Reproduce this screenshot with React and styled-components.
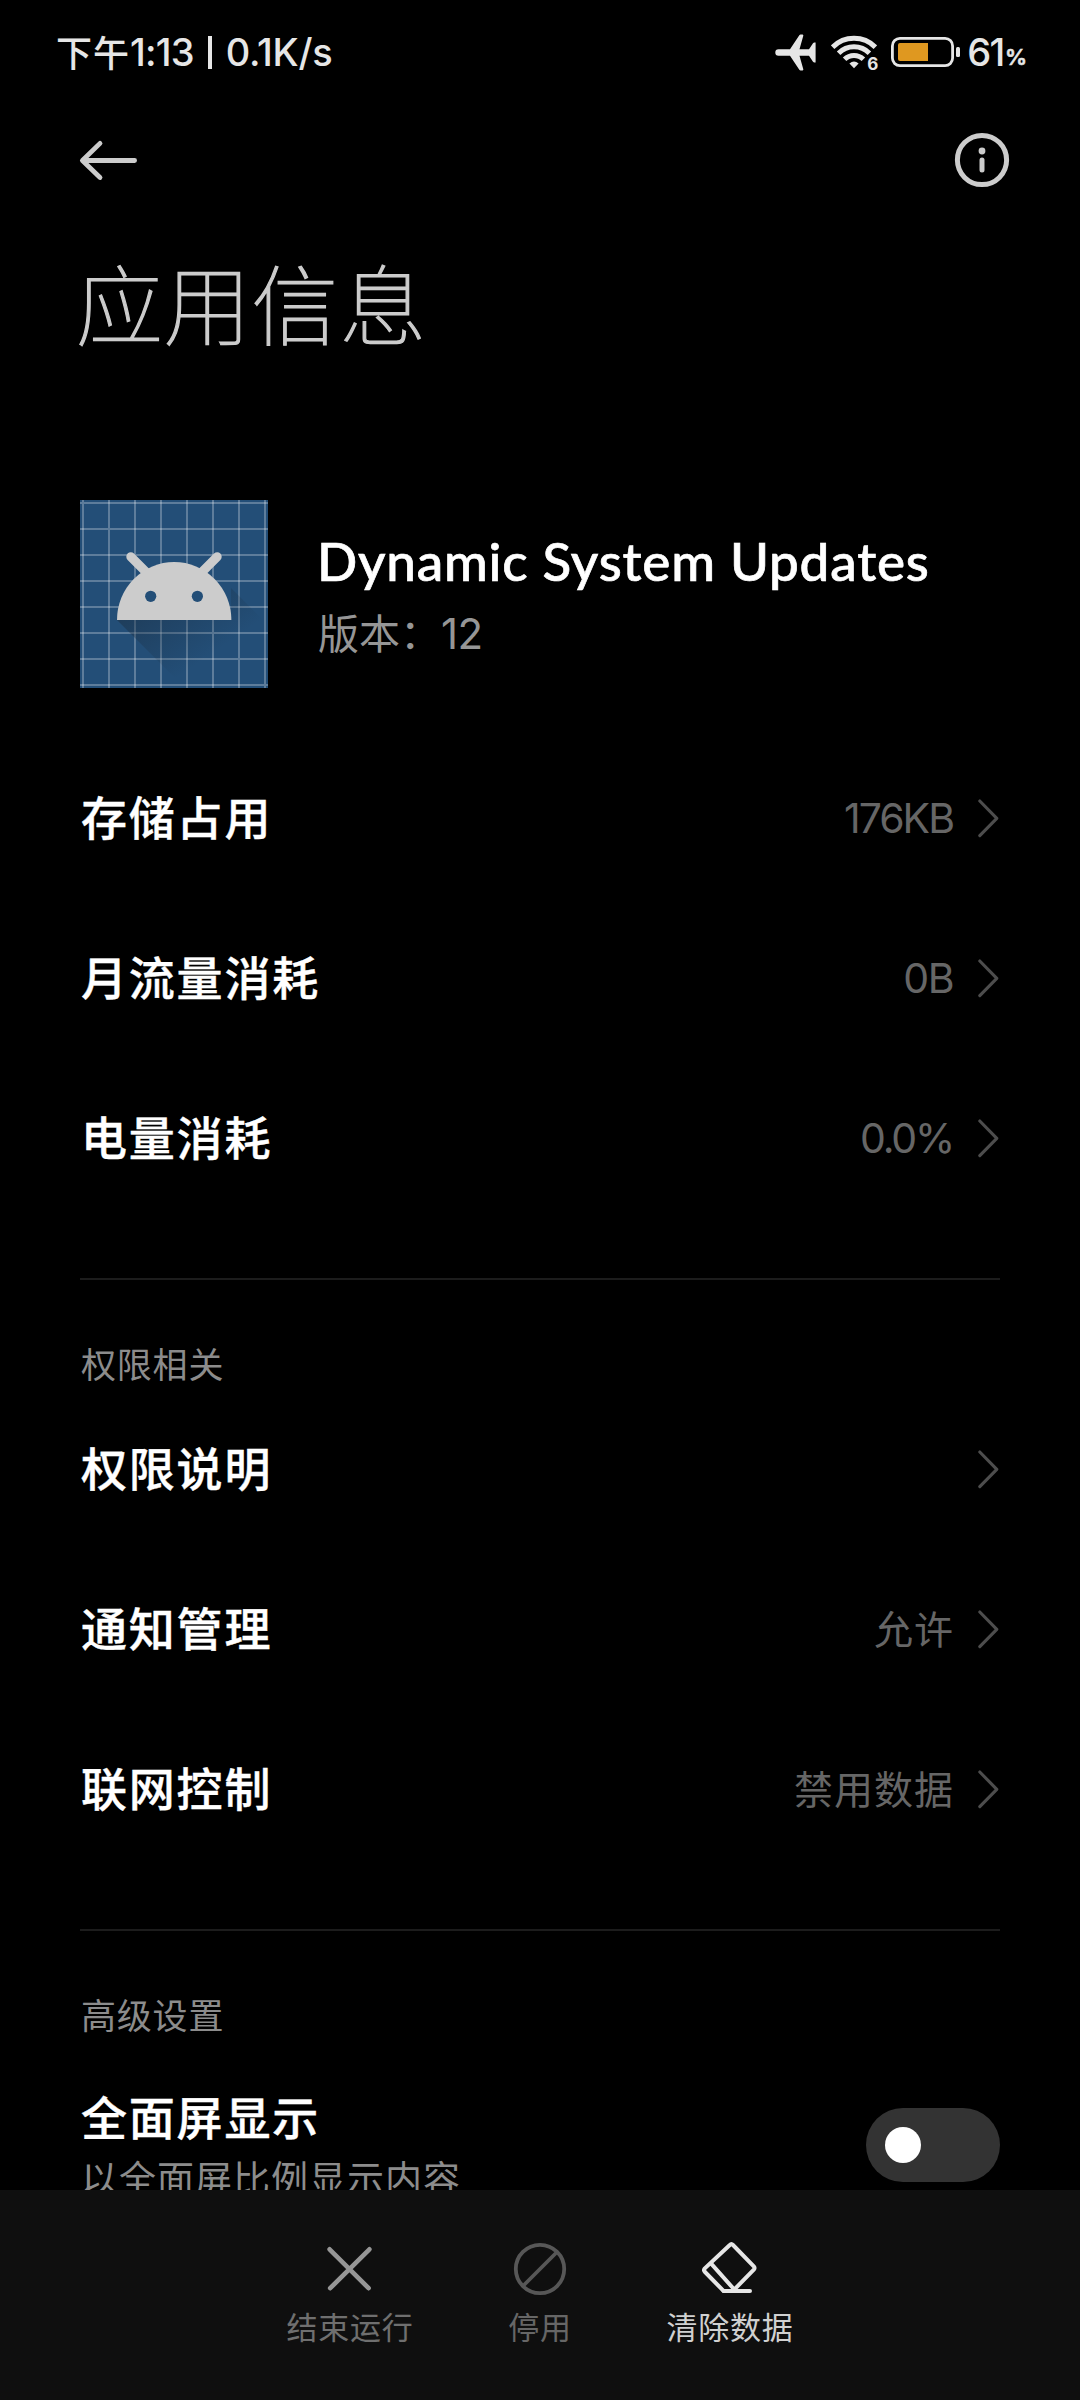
import React from "react";
import styled, { createGlobalStyle } from "styled-components";

const CJK = '"Noto Sans CJK SC", sans-serif';
const LATIN = 'Inter, "Noto Sans CJK SC", sans-serif';

const GlobalStyle = createGlobalStyle`
  * { box-sizing: border-box; }
  html, body { margin: 0; background: #000; }
  svg { display: block; flex: none; }
`;

const Screen = styled.div`
  display: flex;
  flex-direction: column;
  width: 1080px;
  height: 2400px;
  overflow: hidden;
  background: #000;
  color: #fff;
  font-family: ${CJK};
  white-space: nowrap;
`;

const StatusBar = styled.header`
  display: flex;
  flex: none;
  justify-content: space-between;
  align-items: center;
  height: 104px;
  padding: 0 54px 0 56px;
  color: #e6e6e6;
`;

const StatusGroup = styled.div`
  display: flex;
  align-items: center;
`;

const Clock = styled.span`
  font: 500 36px/44px ${CJK};
  letter-spacing: 1px;
  padding-bottom: 2px;
`;

const StatusText = styled.span`
  font: 500 38px/44px ${LATIN};
  letter-spacing: ${(p) => p.$spacing}px;
  margin-left: ${(p) => p.$gap || 0}px;
`;

const Separator = styled.span`
  width: 4px;
  height: 33px;
  margin: 0 14px;
  background: #e6e6e6;
`;

const Percent = styled.span`
  font: 600 22px/28px ${LATIN};
  margin: 10px 0 0 1px;
  letter-spacing: -1px;
  -webkit-text-stroke: 0.5px #e6e6e6;
`;

const AppBar = styled.nav`
  display: flex;
  flex: none;
  justify-content: space-between;
  align-items: center;
  height: 112px;
  padding: 0 70px 0 79px;
`;

const IconButton = styled.button`
  display: flex;
  padding: 0;
  border: 0;
  background: none;
  color: #ccc;
`;

const Content = styled.main`
  flex: 1;
  min-height: 0;
  overflow: hidden;
  padding: 0 80px;
`;

const PageTitle = styled.h1`
  height: 284px;
  margin: 0 0 0 -4px;
  padding-top: 21px;
  color: #ccc;
  font: 100 87px/128px ${CJK};
  letter-spacing: 0.8px;
  -webkit-text-stroke: 1.2px #ccc;
`;

const AppSummary = styled.section`
  display: flex;
  height: 238px;
`;

const AppText = styled.div`
  display: flex;
  flex-direction: column;
  padding: 29px 0 0 49px;
`;

const AppName = styled.h2`
  margin: 0;
  font: 500 53px/64px Lato, sans-serif;
  letter-spacing: 0.8px;
  -webkit-text-stroke: 0.7px #fff;
`;

const Version = styled.div`
  display: flex;
  align-items: baseline;
  margin-top: 8px;
  padding-left: 1px;
  color: #969696;
  font: 400 41px/60px ${CJK};
`;

const VersionNumber = styled.span`
  font: 400 42px/60px ${LATIN};
  letter-spacing: -0.5px;
`;

const Row = styled.div`
  display: flex;
  justify-content: space-between;
  align-items: center;
  height: ${(p) => p.$height || 160}px;
`;

const RowLabel = styled.div`
  padding: 0 0 7px 1px;
  font: 500 46px/64px ${CJK};
  letter-spacing: 1.8px;
  -webkit-text-stroke: 0.4px #fff;
`;

const RowEnd = styled.div`
  display: flex;
  align-items: center;
  gap: 25px;
  padding-right: 1px;
  color: #4d4d4d;
`;

const Value = styled.span`
  color: #666;
  font: 400 ${(p) => (p.$latin ? 41 : 39)}px/56px ${(p) => (p.$latin ? LATIN : CJK)};
  letter-spacing: ${(p) => p.$spacing}px;
  padding-bottom: ${(p) => (p.$latin ? 0 : 5)}px;
  margin-right: ${(p) => (p.$latin ? 0 : -1)}px;
`;

const Divider = styled.hr`
  height: 2px;
  margin: 60px 0 0;
  border: 0;
  background: #1c1c1c;
`;

const SectionTitle = styled.h3`
  height: 109px;
  margin: 0;
  padding: 59px 0 0 1px;
  color: #8c8c8c;
  font: 400 35px/48px ${CJK};
  letter-spacing: 0.8px;
`;

const LabelStack = styled.div`
  display: flex;
  flex-direction: column;
  align-self: flex-start;
  padding-top: 43px;
`;

const RowHint = styled.div`
  padding-left: 1px;
  margin-top: -4px;
  color: #8c8c8c;
  font: 400 37px/54px ${CJK};
  letter-spacing: 1px;
`;

const Switch = styled.div`
  display: flex;
  align-items: center;
  width: 134px;
  height: 74px;
  padding-left: 19px;
  border-radius: 37px;
  background: #333;
`;

const Knob = styled.span`
  width: 36px;
  height: 36px;
  border-radius: 50%;
  background: #fff;
`;

const BottomBar = styled.footer`
  display: flex;
  flex: none;
  justify-content: center;
  height: 210px;
  background: #0f0f0f;
`;

const Action = styled.div`
  display: flex;
  flex-direction: column;
  align-items: center;
  width: 190px;
  padding-top: 50px;
  color: ${(p) => p.$icon};
`;

const ActionLabel = styled.span`
  margin-top: 8px;
  color: ${(p) => p.$color};
  font: 400 31px/44px ${CJK};
  letter-spacing: 0.8px;
`;

const PlaneIcon = () => (
  <svg width="41" height="37" viewBox="0 0 41 37" fill="#e6e6e6">
    <path d="M3.5 15.3H15L24.3 1.2Q25 .3 26 .5H27.6Q28.6.8 28.3 1.8L24.5 15.3H34L38 9.3Q38.6 8.6 39.4 8.6H40.6V28.4H39.4Q38.6 28.4 38 27.7L34 21.7H24.5L28.3 35.2Q28.6 36.2 27.6 36.5H26Q25 36.7 24.3 35.8L15 21.7H3.5A3.2 3.2 0 0 1 3.5 15.3Z" />
  </svg>
);

const WifiBox = styled.div`
  display: flex;
  align-items: flex-end;
  margin: 0 13px 0 15px;
  height: 36px;
`;

const WifiGeneration = styled.span`
  font: 700 17px/18px ${LATIN};
  margin: 0 0 -3px -10px;
`;

const WifiIcon = () => (
  <svg width="46" height="36" viewBox="0 0 46 36" fill="none" stroke="#e6e6e6" strokeWidth="5">
    <path d="M1.6 13.2A30.2 30.2 0 0 1 44.4 13.2" />
    <path d="M7.6 19.2A21.8 21.8 0 0 1 38.4 19.2" />
    <path d="M13.6 25.3A13.4 13.4 0 0 1 32.4 25.3" />
    <path d="M18.4 29.4Q23 25.6 27.6 29.4L23 34.2Z" fill="#e6e6e6" stroke="none" />
  </svg>
);

const BatteryIcon = () => (
  <svg width="69" height="30" viewBox="0 0 69 30">
    <rect x="1.4" y="1.4" width="60.2" height="27.2" rx="7.5" fill="none" stroke="#e6e6e6" strokeWidth="2.8" />
    <path d="M9 6H37V24H9Q7 24 7 22V8Q7 6 9 6Z" fill="#df9820" />
    <rect x="65" y="10" width="4" height="10" rx="1.5" fill="#e6e6e6" />
  </svg>
);

const BackIcon = () => (
  <svg width="60" height="44" viewBox="0 0 60 44" fill="none" stroke="currentColor" strokeWidth="4.8" strokeLinecap="round" strokeLinejoin="round">
    <path d="M55.6 22.5H4M21 5.4L3.4 22.5L21 39.5" />
  </svg>
);

const InfoIcon = () => (
  <svg width="56" height="56" viewBox="0 0 56 56" fill="none" stroke="currentColor">
    <circle cx="28" cy="28" r="24.6" strokeWidth="5" />
    <circle cx="28" cy="19" r="3.4" fill="currentColor" stroke="none" />
    <path d="M28 28V38" strokeWidth="5" strokeLinecap="round" />
  </svg>
);

const Chevron = () => (
  <svg width="21" height="40" viewBox="0 0 21 40" fill="none" stroke="currentColor" strokeWidth="3.1" strokeLinecap="round" strokeLinejoin="round">
    <path d="M1.8 3L18.8 20.3L1.8 37.6" />
  </svg>
);

const GRID = [3, 29, 55, 81, 107, 133, 159, 185];

const AppIcon = () => (
  <svg width="188" height="188" viewBox="0 0 188 188">
    <defs>
      <linearGradient id="cast" gradientUnits="userSpaceOnUse" x1="90" y1="80" x2="138" y2="150">
        <stop offset="0" stopColor="#1a2c3e" stopOpacity=".5" />
        <stop offset="1" stopColor="#1a2c3e" stopOpacity="0" />
      </linearGradient>
    </defs>
    <rect width="188" height="188" fill="#234e77" />
    <g stroke="#fff" strokeOpacity=".27" strokeWidth="2">
      {GRID.map((n) => (
        <path key={n} d={`M${n} 0V188M0 ${n}H188`} />
      ))}
    </g>
    <path d="M37 120L105 188H188V125L151 88V120Z" fill="url(#cast)" />
    <g stroke="#ccc" strokeWidth="9" strokeLinecap="round">
      <path d="M50.8 56.8L68 74M137.2 56.8L120 74" />
    </g>
    <path d="M37 120A57.2 58 0 0 1 151.4 120Z" fill="#ccc" />
    <circle cx="70.7" cy="96.3" r="5.6" fill="#234e77" />
    <circle cx="117.4" cy="96.3" r="5.6" fill="#234e77" />
  </svg>
);

const CloseIcon = () => (
  <svg width="56" height="56" viewBox="0 0 56 56" fill="none" stroke="currentColor" strokeWidth="4.6" strokeLinecap="round">
    <path d="M7.6 9.3L46.6 48.2M47.4 9.3L8.2 48.2" />
  </svg>
);

const BanIcon = () => (
  <svg width="56" height="56" viewBox="0 0 56 56" fill="none" stroke="currentColor" strokeWidth="3.8">
    <circle cx="28" cy="29" r="24.2" />
    <path d="M44.5 12.5L11.5 45.5" />
  </svg>
);

const EraserIcon = () => (
  <svg width="56" height="56" viewBox="0 0 56 56" fill="none" stroke="currentColor" strokeWidth="4" strokeLinecap="round" strokeLinejoin="round">
    <path d="M27.8 5Q29.4 3.4 31 5L51.8 26.4Q53.2 28 51.8 29.6L31 50.9H21.5L3 32Q1.2 30.2 2.8 28.4Z" />
    <path d="M9.6 24.2L31.4 48.5M21.5 50.9H48" />
  </svg>
);

function SettingRow({ label, value, latin, spacing }) {
  return (
    <Row>
      <RowLabel>{label}</RowLabel>
      <RowEnd>
        {value && (
          <Value $latin={latin} $spacing={spacing}>
            {value}
          </Value>
        )}
        <Chevron />
      </RowEnd>
    </Row>
  );
}

export default function App() {
  return (
    <Screen>
      <GlobalStyle />
      <StatusBar>
        <StatusGroup>
          <Clock>下午</Clock>
          <StatusText $spacing={-0.8}>1:13</StatusText>
          <Separator />
          <StatusText $spacing={-0.2}>0.1K/s</StatusText>
        </StatusGroup>
        <StatusGroup>
          <PlaneIcon />
          <WifiBox>
            <WifiIcon />
            <WifiGeneration>6</WifiGeneration>
          </WifiBox>
          <BatteryIcon />
          <StatusText $spacing={-1.5} $gap={7}>61</StatusText>
          <Percent>%</Percent>
        </StatusGroup>
      </StatusBar>
      <AppBar>
        <IconButton aria-label="返回"><BackIcon /></IconButton>
        <IconButton aria-label="详情"><InfoIcon /></IconButton>
      </AppBar>
      <Content>
        <PageTitle>应用信息</PageTitle>
        <AppSummary>
          <AppIcon />
          <AppText>
            <AppName>Dynamic System Updates</AppName>
            <Version>
              版本：<VersionNumber>12</VersionNumber>
            </Version>
          </AppText>
        </AppSummary>
        <SettingRow label="存储占用" value="176KB" latin spacing={-2} />
        <SettingRow label="月流量消耗" value="0B" latin spacing={-1.5} />
        <SettingRow label="电量消耗" value="0.0%" latin spacing={-2.2} />
        <Divider />
        <SectionTitle>权限相关</SectionTitle>
        <SettingRow label="权限说明" />
        <SettingRow label="通知管理" value="允许" spacing={1} />
        <SettingRow label="联网控制" value="禁用数据" spacing={1} />
        <Divider />
        <SectionTitle>高级设置</SectionTitle>
        <Row $height={210}>
          <LabelStack>
            <RowLabel>全面屏显示</RowLabel>
            <RowHint>以全面屏比例显示内容</RowHint>
          </LabelStack>
          <Switch><Knob /></Switch>
        </Row>
      </Content>
      <BottomBar>
        <Action $icon="#969696">
          <CloseIcon />
          <ActionLabel $color="#6f6f6f">结束运行</ActionLabel>
        </Action>
        <Action $icon="#575757">
          <BanIcon />
          <ActionLabel $color="#666">停用</ActionLabel>
        </Action>
        <Action $icon="#e6e6e6">
          <EraserIcon />
          <ActionLabel $color="#d0d0d0">清除数据</ActionLabel>
        </Action>
      </BottomBar>
    </Screen>
  );
}
